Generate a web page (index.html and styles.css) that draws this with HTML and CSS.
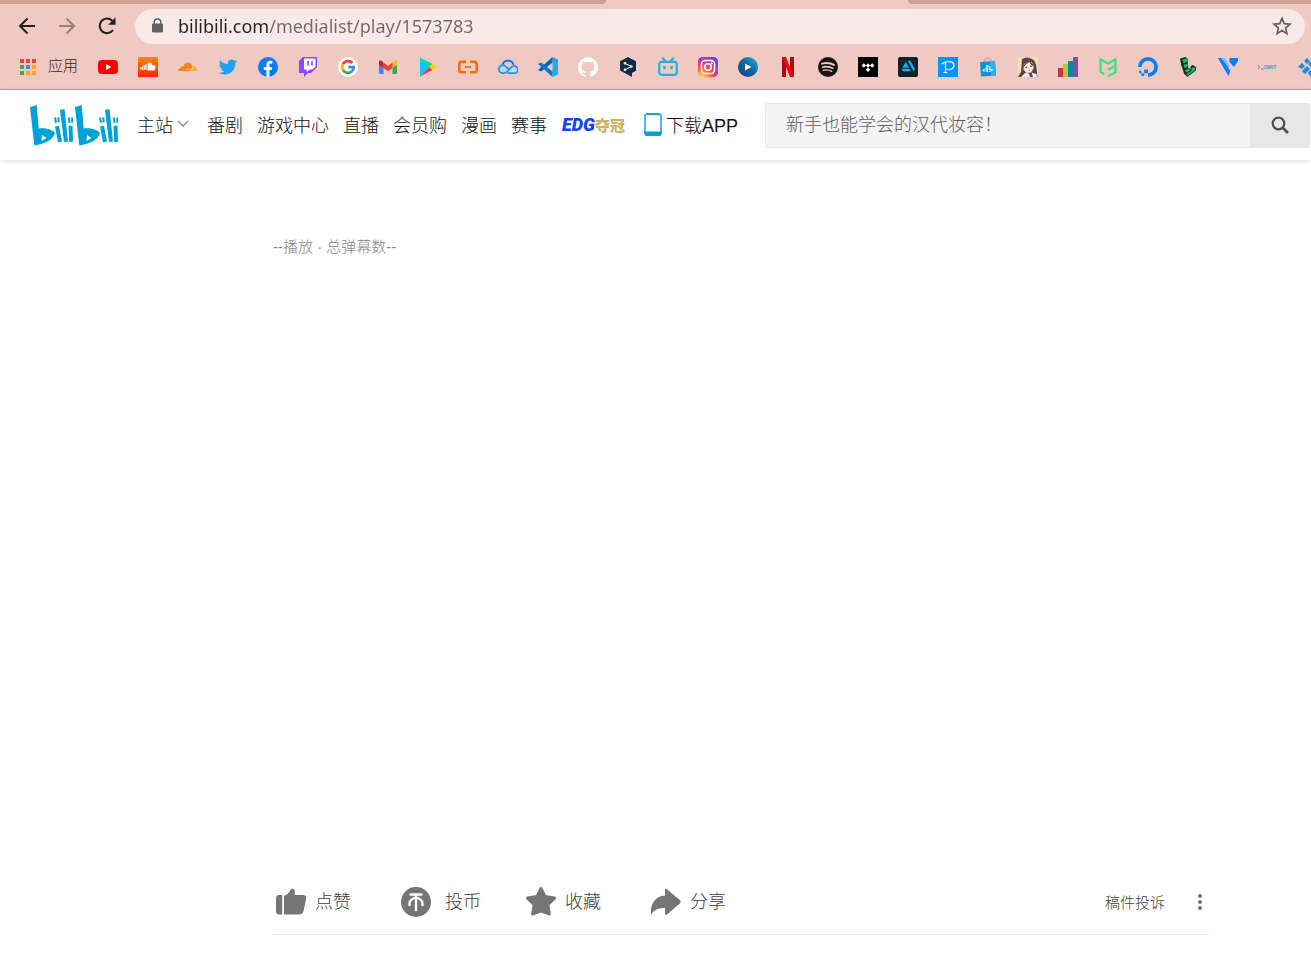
FILE: index.html
```html
<!DOCTYPE html>
<html lang="zh-CN">
<head>
<meta charset="utf-8">
<title>bilibili</title>
<link rel="stylesheet" href="styles.css">
</head>
<body>
<div class="browser">
  <div class="tabstrip"><div class="tab-side tab-left"></div><div class="tab-active"></div><div class="tab-side tab-right"></div></div>
  <div class="toolbar">
    <button class="tool" aria-label="后退"><svg width="20" height="20" viewBox="0 0 20 20" fill="none" stroke="#202124" stroke-width="2"><path d="M18 10H3M10.500 2.500L3 10l7.500 7.500"/></svg></button>
    <button class="tool" aria-label="前进"><svg width="20" height="20" viewBox="0 0 20 20" fill="none" stroke="#9b807c" stroke-width="2"><path d="M2 10h15M9.500 2.500L17 10l-7.500 7.500"/></svg></button>
    <button class="tool" aria-label="刷新"><svg width="20" height="20" viewBox="0 0 20 20"><path d="M16 14a7.300 7.300 0 1 1-.8-9.300" fill="none" stroke="#202124" stroke-width="2.100"/><path d="M18.500 1.300v7.400h-7.300z" fill="#202124"/></svg></button>
    <div class="omnibox">
      <svg width="13" height="16" viewBox="0 0 13 16"><path d="M3.200 6V4.200a3.300 3.300 0 0 1 6.600 0V6" fill="none" stroke="#5f6368" stroke-width="1.500"/><rect x="1" y="5.500" width="11" height="9" rx="1.200" fill="#5f6368"/></svg>
      <input class="url" type="text" aria-label="地址" value="bilibili.com/medialist/play/1573783">
      <button class="tool star" aria-label="收藏此页"><svg width="20" height="20" viewBox="0 0 20 20"><path d="M10 2.400l2.200 5.300 5.800.5-4.400 3.800 1.300 5.600-4.900-3-4.900 3L6.400 12 2 8.200l5.800-.5z" fill="none" stroke="#5f6368" stroke-width="1.700"/></svg></button>
    </div>
  </div>
  <nav class="bookmarks" aria-label="书签">
    <a class="apps" href="#"><svg width="18" height="18" viewBox="0 0 18 18"><path d="M1 1h4v4H1zM7 1h4v4H7zM13 1h4v4h-4z" fill="#ea4335"/><path d="M1 7h4v4H1zM1 13h4v4H1z" fill="#34a853"/><path d="M7 7h4v4H7z" fill="#4285f4"/><path d="M13 7h4v4h-4zM7 13h4v4H7zM13 13h4v4h-4z" fill="#fbab09"/></svg><span>应用</span></a>
    <a href="#" aria-label="YouTube"><svg viewBox="0 0 20 20"><rect y="3" width="20" height="14" rx="4" fill="#f00"/><path d="M8 7l5.200 3L8 13z" fill="#fff"/></svg></a>
    <a href="#" aria-label="SoundCloud"><svg viewBox="0 0 20 20"><defs><linearGradient id="sc" x2="0" y2="1"><stop stop-color="#f80"/><stop offset="1" stop-color="#f20"/></linearGradient></defs><path d="M0 0h20v20H0z" fill="url(#sc)"/><path d="M9.500 13.500V6.200c2.500-1.600 4.500.2 4.800 2 2-.4 3.200.8 3.200 2.500 0 1.500-1 2.600-2.500 2.800z" fill="#fff"/><path d="M8 13V7M6.200 13V8M4.400 13V9.500M2.700 12.500V10.500" stroke="#fff" stroke-width="1.300"/></svg></a>
    <a href="#" aria-label="Cloudflare"><svg viewBox="0 0 20 20"><path d="M0 14c0-2 1.300-3 3-3 0-1.600 1.400-2.400 2.600-1.600C7 3.800 13.500 4.800 14 9.500l1 4.500z" fill="#f6821f"/><path d="M14.300 8.800c3 .1 5 2.200 5.200 5.200H11l3-1.500z" fill="#fbad41"/><path d="M8 12.200l5.500.1M14.300 10.200l-1 3" stroke="#fde4cc" stroke-width=".7"/></svg></a>
    <a href="#" aria-label="Twitter"><svg viewBox="-1 -1 26 26"><path fill="#1da1f2" d="M23.953 4.570a10 10 0 01-2.825.775 4.958 4.958 0 002.163-2.723c-.951.555-2.005.959-3.127 1.184a4.920 4.920 0 00-8.384 4.482C7.690 8.095 4.067 6.130 1.640 3.162a4.822 4.822 0 00-.666 2.475c0 1.710.870 3.213 2.188 4.096a4.904 4.904 0 01-2.228-.616v.060a4.923 4.923 0 003.946 4.827 4.996 4.996 0 01-2.212.085 4.936 4.936 0 004.604 3.417 9.867 9.867 0 01-6.102 2.105c-.390 0-.779-.023-1.170-.067a13.995 13.995 0 007.557 2.209c9.053 0 13.998-7.496 13.998-13.985 0-.210 0-.420-.015-.630A9.935 9.935 0 0024 4.590z"/></svg></a>
    <a href="#" aria-label="Facebook"><svg viewBox="0 0 20 20"><circle cx="10" cy="10" r="10" fill="#0a7cf5"/><path d="M8.400 20v-7H5.800v-3h2.600V7.800c0-2.800 1.700-4 4-4 1 0 1.700.1 2 .2v2.600h-1.300c-1.300 0-1.700.7-1.700 1.600V10h2.900l-.5 3h-2.400v7z" fill="#fff"/></svg></a>
    <a href="#" aria-label="Twitch"><svg viewBox="0 0 20 20"><path d="M5 0h14v10l-6 6h-3l-4 4v-4H1V4z" fill="#9146ff"/><path d="M6 1.500h11.500v8L14.500 12.500h-3l-2.800 2.700v-2.700H6z" fill="#fff"/><path d="M10 4v4.500M14 4v4.500" stroke="#9146ff" stroke-width="1.600"/></svg></a>
    <a href="#" aria-label="Google"><svg viewBox="0 0 20 20"><circle cx="10" cy="10" r="10" fill="#fff"/><g fill="none" stroke-width="2.700"><path d="M14.400 6A5.800 5.800 0 0 0 4.900 7.200" stroke="#ea4335"/><path d="M4.900 7.200a5.800 5.800 0 0 0 0 5.600" stroke="#fbbc05"/><path d="M4.900 12.800a5.800 5.800 0 0 0 9 1.500" stroke="#34a853"/><path d="M13.900 14.300A5.600 5.600 0 0 0 15.700 10.200H10.300" stroke="#4285f4"/></g></svg></a>
    <a href="#" aria-label="Gmail"><svg viewBox="0 0 20 20"><path d="M1 6l4.500 3v8H2.300C1.500 17 1 16.500 1 15.800z" fill="#4285f4"/><path d="M19 6l-4.500 3v8h3.200c.8 0 1.300-.5 1.300-1.200z" fill="#34a853"/><path d="M14.500 6L17 3.600c1-.6 2 0 2 1.200V8l-4.500 3z" fill="#fbbc04"/><path d="M5.500 5.500L10 9l4.500-3.500V11L10 14.300 5.500 11z" fill="#ea4335"/><path d="M1 8V4.800c0-1.200 1-1.800 2-1.200l2.500 1.900V11z" fill="#c5221f"/></svg></a>
    <a href="#" aria-label="Google Play"><svg viewBox="0 0 20 20"><path d="M2 .5v19L11.500 10z" fill="#00c8ff"/><path d="M2 .5L14.500 7 11.500 10z" fill="#00e676"/><path d="M2 19.500L14.500 13l-3-3z" fill="#f43249"/><path d="M14.200 6.900L19 10l-4.800 3.100L11.300 10z" fill="#ffd500"/></svg></a>
    <a href="#" aria-label="阿里云"><svg viewBox="0 0 20 20"><g fill="none" stroke="#ff6a00" stroke-width="2.500"><path d="M8 4.800H3.500Q1.300 4.800 1.300 7v6q0 2.200 2.200 2.200H8M12 4.800h4.500q2.200 0 2.200 2.200v6q0 2.200-2.200 2.200H12"/><path d="M6.800 10h6.400" stroke-width="1.700"/></g></svg></a>
    <a href="#" aria-label="腾讯云"><svg viewBox="0 0 20 20"><g fill="none" stroke-width="1.800"><path d="M4.300 7.800a6 6 0 0 1 11.400 0" stroke="#006eff"/><path d="M7.500 16.200H5A4 4 0 1 1 7.600 9.300L12 13.200M7.500 16.200L13.500 10a3.700 3.700 0 1 1 1.800 6.200H9.500" stroke="#00a3ff"/></g></svg></a>
    <a href="#" aria-label="Visual Studio Code"><svg viewBox="0 0 20 20"><path d="M14.500 0L20 2.400v15.200L14.500 20z" fill="#24a6f2"/><path d="M14.500 5.400L3.200 14.600 0 13l14.500-13z" fill="#0065a9"/><path d="M14.500 14.600L3.200 5.400 0 7l14.500 13z" fill="#007acc"/></svg></a>
    <a href="#" aria-label="GitHub"><svg viewBox="0 0 24 24"><path fill="#fff" d="M12 .297c-6.630 0-12 5.373-12 12 0 5.303 3.438 9.800 8.205 11.385.600.113.820-.258.820-.577 0-.285-.010-1.040-.015-2.040-3.338.724-4.042-1.610-4.042-1.610C4.422 18.070 3.633 17.700 3.633 17.700c-1.087-.744.084-.729.084-.729 1.205.084 1.838 1.236 1.838 1.236 1.070 1.835 2.809 1.305 3.495.998.108-.776.417-1.305.760-1.605-2.665-.300-5.466-1.332-5.466-5.930 0-1.310.465-2.380 1.235-3.220-.135-.303-.540-1.523.105-3.176 0 0 1.005-.322 3.300 1.230.960-.267 1.980-.399 3-.405 1.020.006 2.040.138 3 .405 2.280-1.552 3.285-1.230 3.285-1.230.645 1.653.240 2.873.120 3.176.765.840 1.230 1.910 1.230 3.220 0 4.610-2.805 5.625-5.475 5.920.420.360.810 1.096.810 2.220 0 1.606-.015 2.896-.015 3.286 0 .315.210.690.825.570C20.565 22.092 24 17.592 24 12.297c0-6.627-5.373-12-12-12"/></svg></a>
    <a href="#" aria-label="DeepL"><svg viewBox="0 0 20 20"><path d="M10 0l8 4.300v9.500l-4 2.300V20l-4.500-2.500L2 13.500V4.300z" fill="#0f2b46"/><path d="M7 6.500l6.500 3L7 12.700" fill="none" stroke="#fff"/><g fill="#fff"><circle cx="7" cy="6.300" r="1.300"/><circle cx="13.300" cy="9.500" r="1.300"/><circle cx="7" cy="12.700" r="1.300"/></g></svg></a>
    <a href="#" aria-label="哔哩哔哩"><svg viewBox="0 0 20 20"><g fill="none" stroke="#1eb4e1" stroke-width="2.200"><rect x="1.200" y="4.800" width="17.600" height="13" rx="2.500"/><path d="M4.800 1.200l2.700 3M15.200 1.200l-2.700 3" stroke-linecap="round"/></g><path d="M6.500 9v3.200M13.500 9v3.200" stroke="#1eb4e1" stroke-width="2.400"/></svg></a>
    <a href="#" aria-label="Instagram"><svg viewBox="0 0 20 20"><defs><radialGradient id="ig" cx=".2" cy="1" r="1.200"><stop stop-color="#fd5"/><stop offset=".4" stop-color="#ff543e"/><stop offset=".65" stop-color="#c837ab"/><stop offset="1" stop-color="#4c50dc"/></radialGradient></defs><rect width="20" height="20" rx="4.500" fill="url(#ig)"/><g fill="none" stroke="#fff" stroke-width="1.500"><rect x="3.500" y="3.500" width="13" height="13" rx="3.500"/><circle cx="10" cy="10" r="3.200"/></g><circle cx="13.800" cy="6.200" r="1" fill="#fff"/></svg></a>
    <a href="#" aria-label="播放"><svg viewBox="0 0 20 20"><defs><linearGradient id="pl" x1="1" x2="0" y2="1"><stop stop-color="#20b4dc"/><stop offset=".5" stop-color="#1064a0"/><stop offset="1" stop-color="#153d78"/></linearGradient></defs><circle cx="10" cy="10" r="10" fill="url(#pl)"/><path d="M7 6.500l6.500 3.500L7 13.500z" fill="#fff"/></svg></a>
    <a href="#" aria-label="Netflix"><svg viewBox="0 0 20 20"><path d="M4 0h4v20H4zM12 0h4v20h-4z" fill="#b1060f"/><path d="M4 0h4l8 20h-4z" fill="#e50914"/></svg></a>
    <a href="#" aria-label="Spotify"><svg viewBox="0 0 20 20"><circle cx="10" cy="10" r="10" fill="#191414"/><g fill="none" stroke="#efc9c2" stroke-linecap="round"><path d="M4 6.700c4-1.200 8.500-.8 12 1.200" stroke-width="1.900"/><path d="M4.600 10.200c3.500-1 7.300-.6 10.300 1.200" stroke-width="1.600"/><path d="M5.200 13.300c3-.8 6-.4 8.500 1.100" stroke-width="1.300"/></g></svg></a>
    <a href="#" aria-label="TIDAL"><svg viewBox="0 0 20 20"><path d="M0 0h20v20H0z"/><path d="M5.800 6.300L8 8.500l-2.200 2.200-2.200-2.200zM10 6.300l2.200 2.200L10 10.700 7.800 8.500zM14.200 6.300l2.200 2.200-2.200 2.200L12 8.500zM10 10.600l2.200 2.200L10 15l-2.200-2.200z" fill="#fff"/></svg></a>
    <a href="#" aria-label="ArtStation"><svg viewBox="0 0 20 20"><rect width="20" height="20" rx="2" fill="#16202a"/><path d="M3.500 11.800h8l1.400 2.400H5zM7.700 4.700l3.400 6H4.300zM9.600 3.700h2.800l4.500 8.300-1.400 2.300z" fill="#13aff0"/></svg></a>
    <a href="#" aria-label="pixiv"><svg viewBox="0 0 20 20"><path d="M0 0h20v20H0z" fill="#0096fa"/><path d="M3.700 7C8 3.200 16 4 16 8.300c0 4.200-5 5-8.300 3.700M7.500 5v10.500M5.300 15.500h4" fill="none" stroke="#fff" stroke-width="1.200"/></svg></a>
    <a href="#" aria-label="PlayStation Store"><svg viewBox="0 0 20 20"><path d="M6.500 5V3q3.300-4 6.600 0v2" fill="none" stroke="#f29f83" stroke-width="1.400"/><path d="M2 5l15-1 1 14.500L3 19.500z" fill="#0994e0"/><path d="M12 4.300L17 4l1 14.500-5 .4z" fill="#2bb0ea"/><path d="M8.300 8l1.700.5V15l-1.700-.6z" fill="#fff"/><path d="M10 8.700q2.500.6 2.200 2.500-.5.900-1.600.4M7.700 11.800l-2.700 1q-.7.900.7 1.300l2-.3M10.500 12.800q2.700-.8 4 .1 0 .8-3.700 1.600" fill="none" stroke="#fff" stroke-width=".9"/></svg></a>
    <a href="#" aria-label="头像"><svg viewBox="0 0 20 20"><path d="M0 0h20v20H0z" fill="#efe0b0"/><path d="M4 2q5-3 10 0 4 2 4.500 9l1 9H0l3-5z" fill="#5a4348"/><path d="M5.500 8q3-4 7.500-3.500 3 3 2.500 7L13 15.500l-4.500.5-3-3.500z" fill="#fbe6d6"/><path d="M7 16l4 .5 1 3.500H3zM13.500 15.500l5 1.500.5 3h-4z" fill="#f6efed"/><path d="M12 4Q8.500 5.500 5 10M12 4q.5 2.500 3 4.500" fill="none" stroke="#5a4348" stroke-width="1.300"/><path d="M7.500 10.500h1.700M12.300 9.300h1.500" stroke="#6b5058" stroke-width="1.500"/><path d="M10.500 13.500h1.500" stroke="#cf8a85" stroke-width=".8"/></svg></a>
    <a href="#" aria-label="统计"><svg viewBox="0 0 20 20"><path d="M0 11h5v9H0z" fill="#d52a5b"/><path d="M5 7h5v13H5z" fill="#b5c936"/><path d="M10 4h5v16h-5z" fill="#088aa4"/><path d="M15 0h5v20h-5z" fill="#84509b"/></svg></a>
    <a href="#" aria-label="M3"><svg viewBox="0 0 20 20"><g fill="none" stroke="#45e17e" stroke-width="2.300"><path d="M2.500 15.500V2.200L10 6.600l7.500-4.400v13L10 19.300M10 12.800l7.500-4"/><path d="M2.500 15l4 2"/></g></svg></a>
    <a href="#" aria-label="DigitalOcean"><svg viewBox="0 0 20 20"><path d="M10 18.100A8.100 8.100 0 1 0 1.900 10" fill="none" stroke="#0080ff" stroke-width="3.700"/><path d="M6.200 12.500H10v3.800H6.200zM3.400 16.300h2.800v2.800H3.400zM1 13.800h2.400v2.500H1z" fill="#0080ff"/></svg></a>
    <a href="#" aria-label="Linode"><svg viewBox="0 0 20 20"><path d="M2 1.500L7.500 0l2 1.500.8 9.500 2.200 1V9.500l2-1.500L18 10v3.500l-8.500 6.200-3.300-2.700-1.400-4.500-1.500-4z" fill="#1a2a22"/><path d="M4.500 2.500L9 1.300l.5 3.500-4 1.500zM5.500 8l4-1.400.4 3-3.400 1.700zM7 13.200l3.300-1.700 2.200 1.500-4.500 2.700zM8.500 17l5-3.300v-3.200l3.500-.2v3L9.500 18.500z" fill="#0cc06c"/></svg></a>
    <a href="#" aria-label="Vultr"><svg viewBox="0 0 20 20"><path d="M0 1h7l4.500 8-3.200 6z" fill="#75baff"/><path d="M0 1h3l9 12.500L10.500 19z" fill="#007bfc"/><path d="M2 4l3.500 0 6.500 9.500-1.500 5z" fill="#087ffd"/><path d="M11.500 1H20v3l-4 6-4.500-5z" fill="#007bfc"/></svg></a>
    <a href="#" aria-label="DMIT"><svg class="wide" viewBox="0 0 20 20"><path d="M0 8l2 1.800L0 11.700M3 12h3" fill="none" stroke="#479fd2"/><text x="6" y="12" class="dmit">DMIT</text></svg></a>
    <a href="#" aria-label="云主机"><svg viewBox="0 0 20 20"><path d="M9 1l3 3-3 3-3-3zM4 6l3 3-3 3-4-2zM13 4l6 6-3 3-6-6zM6 12l3-3 3 3-5 5-3-3zM12 13l3 3-3 3-2-3z" fill="#168de2"/></svg></a>
  </nav>
</div>
<header class="header">
  <a class="logo" href="#" aria-label="bilibili">
    <svg width="89" height="41" viewBox="0 0 89 41" fill="#00a1d6">
      <defs><g id="half"><path fill-rule="evenodd" d="M0 2.300L6.700 0l2 23.500c6-1 14 1 16.300 4.500-1 6-10 11-20.700 12.500zM12 30l-.5 6L16.500 33z"/><path d="M25 21.500l4-.7 3 15.800-4 .6zM30 5l4.500-1L38 36.500l-4 .6zM38.500 20.700h4l.5 16-3.800.4zM24 12.800l2-.5 1 5.200-2 .4zM27.300 12.300h2l.3 5.200h-2zM38 12.600l2-.2.400 5.300-2 .2zM41.200 12.400h1.800v5.400h-1.800z"/></g></defs>
      <use href="#half"/><use href="#half" x="45"/>
    </svg>
  </a>
  <nav class="menu">
    <a class="home" href="#">主站<svg width="12" height="8" viewBox="0 0 12 8"><path d="M1 1l5 5 5-5" fill="none" stroke="#999" stroke-width="1.600"/></svg></a>
    <a href="#">番剧</a><a href="#">游戏中心</a><a href="#">直播</a><a href="#">会员购</a><a href="#">漫画</a><a href="#">赛事</a>
    <a class="edg" href="#"><span class="edg-team">EDG</span><span class="edg-win">夺冠</span></a>
    <a class="app" href="#"><svg width="20" height="26" viewBox="-1 -2 20 26"><rect x="1" y="1" width="16" height="21" rx="2" fill="#fff" stroke="#00a1d6" stroke-width="1.400"/><path d="M.5 18.500h17V21q0 2-2 2h-13q-2 0-2-2z" fill="#00a1d6"/><path d="M2.500 1h13" stroke="#00a1d6" stroke-width="1.500"/></svg>下载APP</a>
  </nav>
  <form class="search">
    <input type="search" aria-label="搜索" placeholder="新手也能学会的汉代妆容！">
    <button type="button" aria-label="搜索"><svg width="20" height="20" viewBox="0 0 20 20" fill="none" stroke="#505050" stroke-width="2.200"><circle cx="8.500" cy="8.500" r="5.800"/><path d="M12.500 12.500l5.500 5.500" stroke-width="2.600"/></svg></button>
  </form>
</header>
<main class="page">
  <p class="stats">--播放 · 总弹幕数--</p>
  <div class="player"></div>
  <div class="actions">
    <button class="action"><svg viewBox="0 0 32 32" fill="#757575"><path d="M1 13Q1 9 4 9h3.200v19.500H4q-3 0-3-3.500zM9 10c3-1 4.500-2.800 5.800-5C16 2.500 18 2 19.200 3.500c1 1.300.9 3.500.5 5.500h8c2.600 0 4 1.500 3.400 4L28.500 25c-.7 2.500-2 3.500-4.500 3.500H9z"/></svg>点赞</button>
    <button class="action coin"><svg viewBox="0 0 32 32"><circle cx="16" cy="16" r="15" fill="#757575"/><g fill="none" stroke="#fff" stroke-width="2.400" stroke-linecap="round"><path d="M10.500 8.500h11M16 9v15M9.500 19v-1.500a6.500 5.500 0 0 1 13 0V19"/></g></svg>投币</button>
    <button class="action"><svg viewBox="0 0 32 32"><path d="M16 2.500l4.100 8.100 9.400 1.500-6.700 6.600 1.600 9.300-8.400-3.200-8.400 3.200 1.600-9.300-6.700-6.600 9.400-1.500z" fill="#757575" stroke="#757575" stroke-width="3" stroke-linejoin="round"/></svg>收藏</button>
    <button class="action"><svg viewBox="0 0 32 32"><path d="M15 9.500V4.200Q15 2 17 3.200L30 14.300q1.700 1.500 0 3L17 28.500q-2 1-2-1V22C8 22 4 24 1 28.500 0 17 6 10 15 9.500z" fill="#757575"/></svg>分享</button>
    <a class="report" href="#">稿件投诉</a>
    <button class="more" aria-label="更多"><svg width="6" height="18" viewBox="0 0 6 18" fill="#757575"><circle cx="3" cy="3" r="2"/><circle cx="3" cy="9" r="2"/><circle cx="3" cy="15" r="2"/></svg></button>
  </div>
</main>
</body>
</html>
```
FILE: styles.css
```css
* { box-sizing: border-box; }
body {
  margin: 0;
  min-height: 100vh;
  display: flex;
  flex-direction: column;
  overflow: hidden;
  background: #fff;
  color: #111;
  font-family: "Liberation Sans", "Noto Sans CJK SC", sans-serif;
  font-weight: 300;
}
a { color: inherit; text-decoration: none; }
button { border: 0; padding: 0; background: none; font: inherit; color: inherit; cursor: pointer; }
input { font: inherit; outline: 0; }
svg { display: block; flex: none; }

.browser { background: #efc9c2; border-bottom: 1px solid #b99f9b; }
.tabstrip { display: flex; height: 4px; }
.tab-side { background: #cea193; }
.tab-left { flex: 606; border-bottom-right-radius: 6px; }
.tab-active { flex: 302; }
.tab-right { flex: 403; border-bottom-left-radius: 6px; }
.toolbar { display: flex; align-items: center; height: 44px; padding: 0 6px 0 17px; gap: 20px; }
.tool { width: 20px; height: 20px; }
.omnibox {
  display: flex;
  flex: 1;
  align-items: center;
  height: 35px;
  margin-left: -2px;
  padding: 0 13px 0 16px;
  gap: 14px;
  border-radius: 18px;
  background: #f9eae8;
}
.url {
  flex: 1;
  min-width: 0;
  height: 32px;
  padding: 0;
  border: 0;
  font-family: "Noto Sans", sans-serif;
  font-size: 18px;
  font-weight: 400;
  color: transparent;
  background: linear-gradient(90deg, #202124 91px, #70686a 91px);
  background-clip: text;
  -webkit-background-clip: text;
}
.bookmarks { display: flex; align-items: center; height: 41px; padding: 0 0 3px 19px; gap: 20px; }
.bookmarks a { flex: none; }
.bookmarks a svg { width: 20px; height: 20px; }
.bookmarks .apps { display: flex; align-items: center; width: 59px; gap: 11px; font-size: 15px; line-height: 20px; color: #3a2422; }
.bookmarks .apps span { padding-bottom: 2px; }
.bookmarks .apps svg { width: 18px; height: 18px; }
.bookmarks .wide { overflow: visible; }
.dmit { font: 700 5px "Liberation Sans", sans-serif; fill: #479fd2; }

.header {
  display: flex;
  align-items: center;
  height: 70px;
  padding: 0 1px 0 30px;
  font-size: 18px;
  box-shadow: 0 1px 5px rgba(0, 0, 0, .14);
}
.logo { margin-right: 18px; }
.menu { display: flex; align-items: center; gap: 14px; padding-bottom: 2px; white-space: nowrap; }
.menu a { flex: none; }
.menu .home { display: flex; align-items: center; gap: 4px; margin-right: 4px; }
.menu .edg { display: flex; align-items: center; margin-left: 1px; }
.edg-team { font: italic 900 18px Roboto, sans-serif; color: #1640f0; }
.edg-win { font-size: 15px; font-weight: 900; color: #d4b160; }
.menu .app { display: flex; align-items: center; gap: 3px; margin-left: 4px; }
.search { display: flex; flex: 1; height: 45px; margin-left: 27px; }
.search input {
  flex: 1;
  min-width: 0;
  padding: 0 20px;
  border: 1px solid #e7e7e7;
  border-right: 0;
  border-radius: 3px 0 0 3px;
  background: #f4f4f4;
}
.search input::placeholder { color: #606060; }
.search button { display: flex; align-items: center; justify-content: center; width: 60px; border-radius: 0 3px 3px 0; background: #e7e7e7; }

.page { display: flex; flex: 1; flex-direction: column; margin: 0 102px 28px 273px; padding-top: 76px; }
.stats { margin: 0; font-size: 15px; line-height: 22px; color: #858585; }
.player { flex: 1; }
.actions { display: flex; align-items: center; height: 66px; padding: 0 6px 0 2px; border-bottom: 1px solid #e5e9ef; color: #404040; }
.action { display: flex; align-items: center; width: 125px; gap: 8px; font-size: 18px; line-height: 24px; }
.action svg { width: 32px; height: 32px; }
.coin { gap: 13px; }
.report { margin-left: auto; font-size: 15px; }
.more { margin-left: 32px; }
```
